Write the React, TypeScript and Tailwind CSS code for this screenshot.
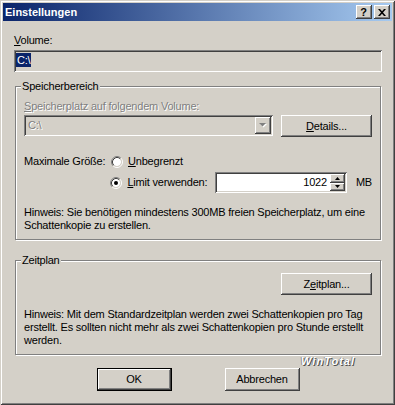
const sunken =
  "shadow-[inset_1px_1px_#808080,inset_-1px_-1px_#ffffff,inset_2px_2px_#404040,inset_-2px_-2px_#d4d0c8]";
const raised =
  "shadow-[inset_-1px_-1px_#404040,inset_1px_1px_#ffffff,inset_-2px_-2px_#808080]";
const etched = "border border-[#808080] shadow-[1px_1px_0_#ffffff,inset_1px_1px_0_#ffffff]";
const disabled = "text-[#808080] [text-shadow:1px_1px_0_#ffffff]";

function Radio({ checked }: { checked?: boolean }) {
  return (
    <svg width="12" height="12" viewBox="0 0 12 12" className="shrink-0">
      <circle cx="6" cy="6" r="4" fill="#fff" />
      <path d="M2.11 9.89 A5.5 5.5 0 0 1 9.89 2.11" fill="none" stroke="#808080" />
      <path d="M9.89 2.11 A5.5 5.5 0 0 1 2.11 9.89" fill="none" stroke="#fff" />
      <path d="M2.82 9.18 A4.5 4.5 0 0 1 9.18 2.82" fill="none" stroke="#404040" />
      <path d="M9.18 2.82 A4.5 4.5 0 0 1 2.82 9.18" fill="none" stroke="#d4d0c8" />
      {checked && <circle cx="6" cy="6" r="2" fill="#000" />}
    </svg>
  );
}

function Button({
  children,
  width,
  height,
  isDefault,
}: {
  children: React.ReactNode;
  width: string;
  height: string;
  isDefault?: boolean;
}) {
  if (isDefault) {
    return (
      <div className={`${width} ${height} border border-black bg-[#d4d0c8]`}>
        <div className={`w-full h-full ${raised} flex items-center justify-center`}>{children}</div>
      </div>
    );
  }
  return (
    <div className={`${width} ${height} bg-[#d4d0c8] ${raised} flex items-center justify-center`}>
      {children}
    </div>
  );
}

export default function App() {
  return (
    <div className="w-[395px] h-[405px] bg-[#d4d0c8] p-[3px] shadow-[inset_1px_1px_#d4d0c8,inset_-1px_-1px_#404040,inset_2px_2px_#ffffff,inset_-2px_-2px_#808080] font-['Liberation_Sans',Arial,sans-serif] text-[11px] leading-[13px] tracking-[-0.2px] text-black">
      {/* Title bar */}
      <div className="h-[18px] flex items-center pl-[2px] pr-[2px] bg-[linear-gradient(to_right,#0a246a,#a6caf0)]">
        <span className="font-bold text-white text-[11px] tracking-normal">Einstellungen</span>
        <div className="ml-auto flex gap-[2px]">
          <div className={`w-[16px] h-[14px] bg-[#d4d0c8] ${raised} flex items-center justify-center`}>
            <span className="font-bold text-[11px] leading-[11px] pr-[1px]">?</span>
          </div>
          <div className={`w-[16px] h-[14px] bg-[#d4d0c8] ${raised} flex items-center justify-center`}>
            <svg width="8" height="7" viewBox="0 0 8 7">
              <path d="M0 0h2l2 2.3L6 0h2L5 3.5 8 7H6L4 4.7 2 7H0l3-3.5z" fill="#000" />
            </svg>
          </div>
        </div>
      </div>

      <div className="pl-[11px] pr-[10px]">
        <div className="mt-[13px]">
          <u>V</u>olume:
        </div>
        <div className={`mt-[3px] h-[22px] ${sunken} pl-[2px] pt-[3px]`}>
          <span className="inline-block bg-[#0a246a] text-white px-[1px] leading-[14px]">C:\</span>
        </div>

        {/* Speicherbereich */}
        <div className={`relative mt-[14px] mx-[1px] ${etched} pt-[13px] pb-[7px] pl-[8px] pr-[8px]`}>
          <span className="absolute -top-[7px] left-[5px] px-[1px] bg-[#d4d0c8]">Speicherbereich</span>
          <div className={disabled}>
            <u>S</u>peicherplatz auf folgendem Volume:
          </div>
          <div className="mt-[2px] flex items-start justify-between">
            <div className={`w-[249px] h-[21px] ${sunken} flex items-center pl-[4px] pr-[2px]`}>
              <span className={disabled}>C:\</span>
              <div className={`ml-auto w-[16px] h-[17px] bg-[#d4d0c8] ${raised} flex items-center justify-center`}>
                <svg width="8" height="5" viewBox="0 0 8 5">
                  <path d="M1 1h7L4.5 4.5z" fill="#fff" />
                  <path d="M0 0h7L3.5 3.5z" fill="#808080" />
                </svg>
              </div>
            </div>
            <Button width="w-[91px]" height="h-[22px]">
              <span>
                <u>D</u>etails...
              </span>
            </Button>
          </div>

          <div className="mt-[18px] flex items-center h-[13px]">
            <span className="w-[87px]">Maximale Größe:</span>
            <Radio />
            <span className="ml-[5px]">
              <u>U</u>nbegrenzt
            </span>
          </div>
          <div className="mt-[4px] flex items-center h-[21px]">
            <span className="w-[87px]" />
            <Radio checked />
            <span className="ml-[5px] w-[88px]">
              <u>L</u>imit verwenden:
            </span>
            <div className={`w-[133px] h-[21px] bg-white ${sunken} p-[2px] flex`}>
              <span className="flex-1 text-right pr-[3px] pt-[2px]">1022</span>
              <div className="w-[15px] flex flex-col">
                <div className={`flex-1 bg-[#d4d0c8] ${raised} flex items-center justify-center`}>
                  <svg width="5" height="3" viewBox="0 0 5 3">
                    <path d="M2.5 0L5 3H0z" fill="#000" />
                  </svg>
                </div>
                <div className={`flex-1 bg-[#d4d0c8] ${raised} flex items-center justify-center`}>
                  <svg width="5" height="3" viewBox="0 0 5 3">
                    <path d="M0 0h5L2.5 3z" fill="#000" />
                  </svg>
                </div>
              </div>
            </div>
            <span className="ml-[9px]">MB</span>
          </div>

          <div className="mt-[13px] whitespace-nowrap">
            Hinweis: Sie benötigen mindestens 300MB freien Speicherplatz, um eine
            <br />
            Schattenkopie zu erstellen.
          </div>
        </div>

        {/* Zeitplan */}
        <div className={`relative mt-[20px] mx-[1px] ${etched} pt-[12px] pb-[7px] pl-[8px] pr-[8px]`}>
          <span className="absolute -top-[7px] left-[5px] px-[1px] bg-[#d4d0c8]">Zeitplan</span>
          <div className="flex justify-end">
            <Button width="w-[91px]" height="h-[22px]">
              <span>
                Z<u>e</u>itplan...
              </span>
            </Button>
          </div>
          <div className="mt-[13px] whitespace-nowrap">
            Hinweis: Mit dem Standardzeitplan werden zwei Schattenkopien pro Tag
            <br />
            erstellt. Es sollten nicht mehr als zwei Schattenkopien pro Stunde erstellt
            <br />
            werden.
          </div>
        </div>

        {/* Watermark */}
        <div className="h-[13px] flex justify-end pr-[27px]">
          <span className="italic font-bold text-[11px] leading-[13px] text-white tracking-[1px] [text-shadow:1px_1px_0_#505050,-1px_0_0_#909090]">
            WinTotal
          </span>
        </div>

        <div className="flex justify-center gap-[53px]">
          <Button width="w-[75px]" height="h-[23px]" isDefault>
            OK
          </Button>
          <Button width="w-[75px]" height="h-[23px]">
            Abbrechen
          </Button>
        </div>
      </div>
    </div>
  );
}
